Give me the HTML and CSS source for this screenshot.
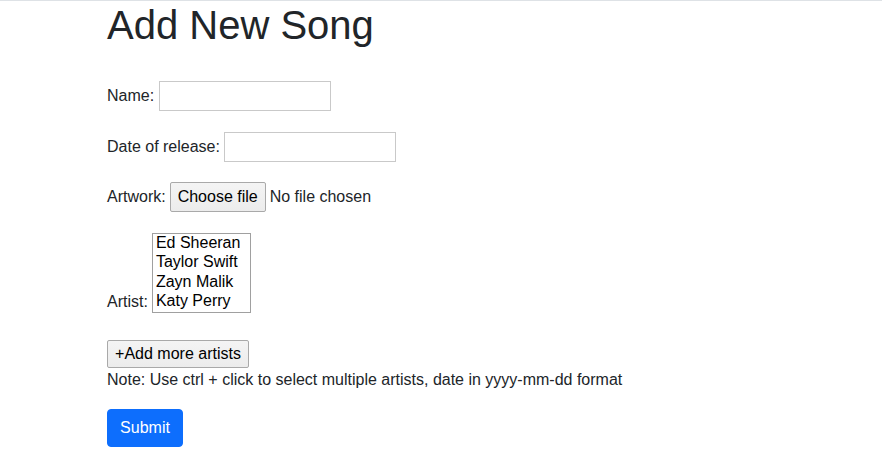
FILE: index.html
```html
<!DOCTYPE html>
<html lang="en">
<head>
<meta charset="utf-8">
<title>Add New Song</title>
<link rel="stylesheet" href="styles.css">
</head>
<body>
<div class="container">
  <h1 class="title">Add New Song</h1>
  <form class="song-form">
    <div class="row row-name">
      <label class="label" for="name">Name:</label>
      <input class="text-input" type="text" id="name">
    </div>
    <div class="row">
      <label class="label" for="date">Date of release:</label>
      <input class="text-input" type="text" id="date">
    </div>
    <div class="row row-file">
      <label class="label">Artwork:</label>
      <button type="button" class="gray-btn file-btn">Choose file</button>
      <span class="file-status">No file chosen</span>
    </div>
    <div class="row row-artist">
      <label class="label label-artist" for="artist">Artist:</label>
      <select class="artist-select" id="artist" multiple size="4">
        <option>Ed Sheeran</option>
        <option>Taylor Swift</option>
        <option>Zayn Malik</option>
        <option>Katy Perry</option>
      </select>
    </div>
    <button type="button" class="gray-btn add-btn">+Add more artists</button>
    <div class="note">Note: Use ctrl + click to select multiple artists, date in yyyy-mm-dd format</div>
    <button type="submit" class="submit-btn">Submit</button>
  </form>
</div>
</body>
</html>
```
FILE: styles.css
```css
html, body {
  margin: 0;
  padding: 0;
  background: #fff;
}
body {
  border-top: 1px solid #dee2e6;
  font-family: "Liberation Sans", Arial, Helvetica, sans-serif;
  font-size: 16px;
  line-height: 1.5;
  color: #212529;
}
.container {
  padding-left: 107px;
}
.title {
  margin: 0;
  font-size: 40px;
  font-weight: 400;
  line-height: 1.2;
  color: #212529;
}
.song-form {
  display: flex;
  flex-direction: column;
  align-items: flex-start;
  margin-top: 32px;
}
.row {
  display: flex;
  align-items: center;
  gap: 4px;
  height: 30px;
  margin-bottom: 21px;
}
.row-name {
  gap: 5px;
}
.row-file {
  margin-top: -1px;
}
.label {
  white-space: nowrap;
}
.text-input {
  box-sizing: border-box;
  width: 172px;
  height: 30px;
  margin: 0;
  border: 1px solid #c9c9c9;
  border-radius: 0;
  padding: 2px 4px;
  font: inherit;
  background: #fff;
}
.gray-btn {
  box-sizing: border-box;
  margin: 0;
  font-family: "Liberation Sans", Arial, Helvetica, sans-serif;
  font-size: 16px;
  line-height: 18px;
  color: #000;
  background: linear-gradient(#f4f4f4, #ececec);
  border: 1px solid #a9a9a9;
  border-radius: 2px;
  padding: 0 8px;
}
.file-btn {
  height: 30px;
  width: 96px;
  padding: 0;
}
.file-status {
  color: #212529;
}
.row-artist {
  height: auto;
  align-items: flex-end;
  margin-bottom: 27px;
}
.label-artist {
  line-height: 18px;
  padding-bottom: 2px;
}
.artist-select {
  box-sizing: border-box;
  width: 99px;
  height: 80px;
  margin: 0;
  padding: 0;
  border: 1px solid #a0a0a0;
  border-radius: 0;
  font-family: "Liberation Sans", Arial, Helvetica, sans-serif;
  font-size: 16px;
  color: #000;
  background: #fff;
  overflow: hidden;
}
.artist-select option {
  padding: 0 3px 1px;
  line-height: 18px;
  min-height: 0;
  height: 18.3px;
}
.add-btn {
  height: 28px;
  width: 142px;
  padding: 0;
}
.note {
  line-height: 24px;
}
.submit-btn {
  margin-top: 17px;
  box-sizing: border-box;
  height: 38px;
  width: 76px;
  padding: 0;
  font-family: "Liberation Sans", Arial, Helvetica, sans-serif;
  font-size: 16px;
  line-height: 24px;
  color: #fff;
  background: #0d6efd;
  border: 1px solid #0d6efd;
  border-radius: 4px;
}
```
